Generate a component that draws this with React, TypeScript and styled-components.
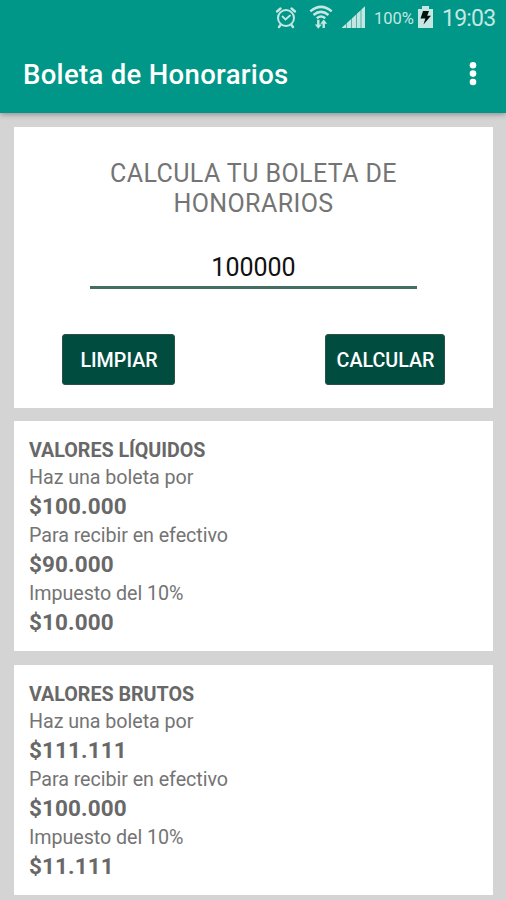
import React, { useState } from "react";
import styled, { createGlobalStyle } from "styled-components";

const GlobalStyle = createGlobalStyle`
  * { box-sizing: border-box; }
  body {
    margin: 0;
    background: #d4d4d4;
    font-family: Roboto, "Liberation Sans", sans-serif;
  }
`;

const Screen = styled.div`
  width: 506px;
  height: 900px;
  overflow: hidden;
  display: flex;
  flex-direction: column;
  background: #d4d4d4;
`;

const Header = styled.header`
  flex: none;
  height: 113px;
  background: #009688;
  box-shadow: 0 1px 6px rgba(0, 0, 0, 0.38);
`;

const StatusBar = styled.div`
  height: 35px;
  display: flex;
  align-items: center;
  justify-content: flex-end;
  padding-right: 10px;
  color: #c3e7e2;

  svg { display: block; flex: none; }
`;

const StatusIcons = styled.div`
  display: flex;
  align-items: center;
`;

const Spaced = styled.span<{ $left: number }>`
  margin-left: ${(p) => p.$left}px;
`;

const BatteryLevel = styled.span`
  width: 40px;
  margin: 2px 4px 0 8px;
  font-size: 16.5px;
  letter-spacing: 0;
  white-space: nowrap;
`;

const Clock = styled.span`
  width: 54px;
  margin-left: 9px;
  font-size: 23px;
  letter-spacing: -0.8px;
  line-height: 35px;
  padding-top: 1px;
`;

const AppBar = styled.div`
  height: 78px;
  display: flex;
  align-items: center;
  justify-content: space-between;
  padding: 0 29px 0 23px;
`;

const AppTitle = styled.h1`
  margin: 0;
  color: #fff;
  font-size: 27.5px;
  font-weight: 500;
  letter-spacing: 0.32px;
  white-space: nowrap;
`;

const MenuButton = styled.button`
  padding: 0;
  border: 0;
  background: none;
  color: #fff;
  svg { display: block; }
`;

const Content = styled.main`
  display: flex;
  flex-direction: column;
  gap: 14px;
  padding: 14px 13px 0 14px;
`;

const Card = styled.section`
  height: 230px;
  padding: 15px;
  background: #fff;
  color: #686868;
`;

const FormCard = styled(Card)`
  height: 281px;
  margin-bottom: -1px;
  padding: 32px 48px 22px 48px;
  display: flex;
  flex-direction: column;
`;

const FormTitle = styled.h2`
  margin: 0;
  color: #747474;
  font-size: 25px;
  font-weight: 400;
  letter-spacing: 0.42px;
  line-height: 30px;
  text-align: center;
`;

const AmountInput = styled.input`
  width: 327px;
  height: 46px;
  margin: 24px 0 0 28px;
  padding: 5px 0 0;
  border: 0;
  border-bottom: 3px solid #446d63;
  border-radius: 0;
  outline: 0;
  background: none;
  color: #111;
  font: 400 25px Roboto, sans-serif;
  text-align: center;
`;

const Actions = styled.div`
  display: flex;
  justify-content: space-between;
  margin-top: 45px;
`;

const ActionButton = styled.button<{ $width: number }>`
  width: ${(p) => p.$width}px;
  height: 51px;
  padding: 1px 0 0 1px;
  border: 1px solid #2d5145;
  border-radius: 3px;
  background: #004d40;
  color: #fff;
  font: 500 19.7px Roboto, sans-serif;
`;

const SectionTitle = styled.h2`
  margin: 0;
  font-size: 19.7px;
  font-weight: 700;
  letter-spacing: -0.03px;
  line-height: 28px;
  padding-top: 1px;
`;

const Values = styled.dl`
  margin: -1px 0 0;
`;

const Label = styled.dt`
  color: #747474;
  font-size: 19.7px;
  letter-spacing: -0.05px;
  line-height: 27px;
`;

const Amount = styled.dd`
  margin: 0;
  font-size: 22.5px;
  font-weight: 700;
  letter-spacing: 0.1px;
  line-height: 31.1px;
`;

const AlarmIcon = () => (
  <svg width="22" height="24" viewBox="0 0 22 24" fill="none" stroke="currentColor" strokeLinecap="round">
    <circle cx="11" cy="12" r="8" strokeWidth="2" />
    <path d="M2 5.5 5.5 2.5M20 5.5 16.5 2.5M5.5 19 4 21M16.5 19 18 21" strokeWidth="2.4" />
    <path d="m7.5 10.5 3 3 4.5-4" strokeWidth="1.8" />
  </svg>
);

const WifiIcon = () => (
  <svg width="24" height="26" viewBox="0 0 24 26" fill="none" stroke="currentColor">
    <path d="M1.3 6.4Q12-2.6 22.7 6.4M4.5 10Q12 3.7 19.5 10M7.8 13.2Q12 9.8 16.2 13.2" strokeWidth="2.5" />
    <path d="M9.3 14.8v7M14.7 23v-5" strokeWidth="2.4" />
    <path d="M5.8 19.6h7l-3.5 4.2zM11.2 18.7h7l-3.5-4.2z" fill="currentColor" stroke="none" />
  </svg>
);

const SignalIcon = () => (
  <svg width="25" height="25" viewBox="0 0 25 25" fill="currentColor">
    <path d="M1 22.5 5 19v4H1zM6 18l4-3.7V23H6zM11 13.5l4-3.8V23h-4zM16 8.8l3.5-3.3V23H16zM20.5 4.5l3.5-3.3V23h-3.5z" />
    <path d="M1 22.5 24 1.2V23H1z" opacity=".4" />
  </svg>
);

const BatteryIcon = () => (
  <svg width="15" height="23" viewBox="0 0 15 23">
    <path d="M4 0h7v3h4v19H0V3h4z" fill="currentColor" />
    <path d="M5 5h6l-1.8 4.8H13L5.5 18.6l1.8-6.2H2.5z" fill="#06110f" />
  </svg>
);

const MoreIcon = () => (
  <svg width="8" height="26" viewBox="0 0 8 26" fill="currentColor">
    <circle cx="4" cy="4.2" r="3.3" />
    <circle cx="4" cy="12.6" r="3.3" />
    <circle cx="4" cy="21" r="3.3" />
  </svg>
);

const sections = [
  {
    title: "VALORES LÍQUIDOS",
    rows: [
      ["Haz una boleta por", "$100.000"],
      ["Para recibir en efectivo", "$90.000"],
      ["Impuesto del 10%", "$10.000"],
    ],
  },
  {
    title: "VALORES BRUTOS",
    rows: [
      ["Haz una boleta por", "$111.111"],
      ["Para recibir en efectivo", "$100.000"],
      ["Impuesto del 10%", "$11.111"],
    ],
  },
];

export default function App() {
  const [amount, setAmount] = useState("100000");
  return (
    <Screen>
      <GlobalStyle />
      <Header>
        <StatusBar>
          <StatusIcons>
            <AlarmIcon />
            <Spaced $left={12}><WifiIcon /></Spaced>
            <Spaced $left={8}><SignalIcon /></Spaced>
          </StatusIcons>
          <BatteryLevel>100%</BatteryLevel>
          <BatteryIcon />
          <Clock>19:03</Clock>
        </StatusBar>
        <AppBar>
          <AppTitle>Boleta de Honorarios</AppTitle>
          <MenuButton aria-label="Más opciones"><MoreIcon /></MenuButton>
        </AppBar>
      </Header>
      <Content>
        <FormCard>
          <FormTitle>CALCULA TU BOLETA DE HONORARIOS</FormTitle>
          <AmountInput value={amount} onChange={(e) => setAmount(e.target.value)} />
          <Actions>
            <ActionButton $width={113} onClick={() => setAmount("")}>LIMPIAR</ActionButton>
            <ActionButton $width={120}>CALCULAR</ActionButton>
          </Actions>
        </FormCard>
        {sections.map((s) => (
          <Card key={s.title}>
            <SectionTitle>{s.title}</SectionTitle>
            <Values>
              {s.rows.map(([label, value]) => (
                <React.Fragment key={label}>
                  <Label>{label}</Label>
                  <Amount>{value}</Amount>
                </React.Fragment>
              ))}
            </Values>
          </Card>
        ))}
      </Content>
    </Screen>
  );
}
